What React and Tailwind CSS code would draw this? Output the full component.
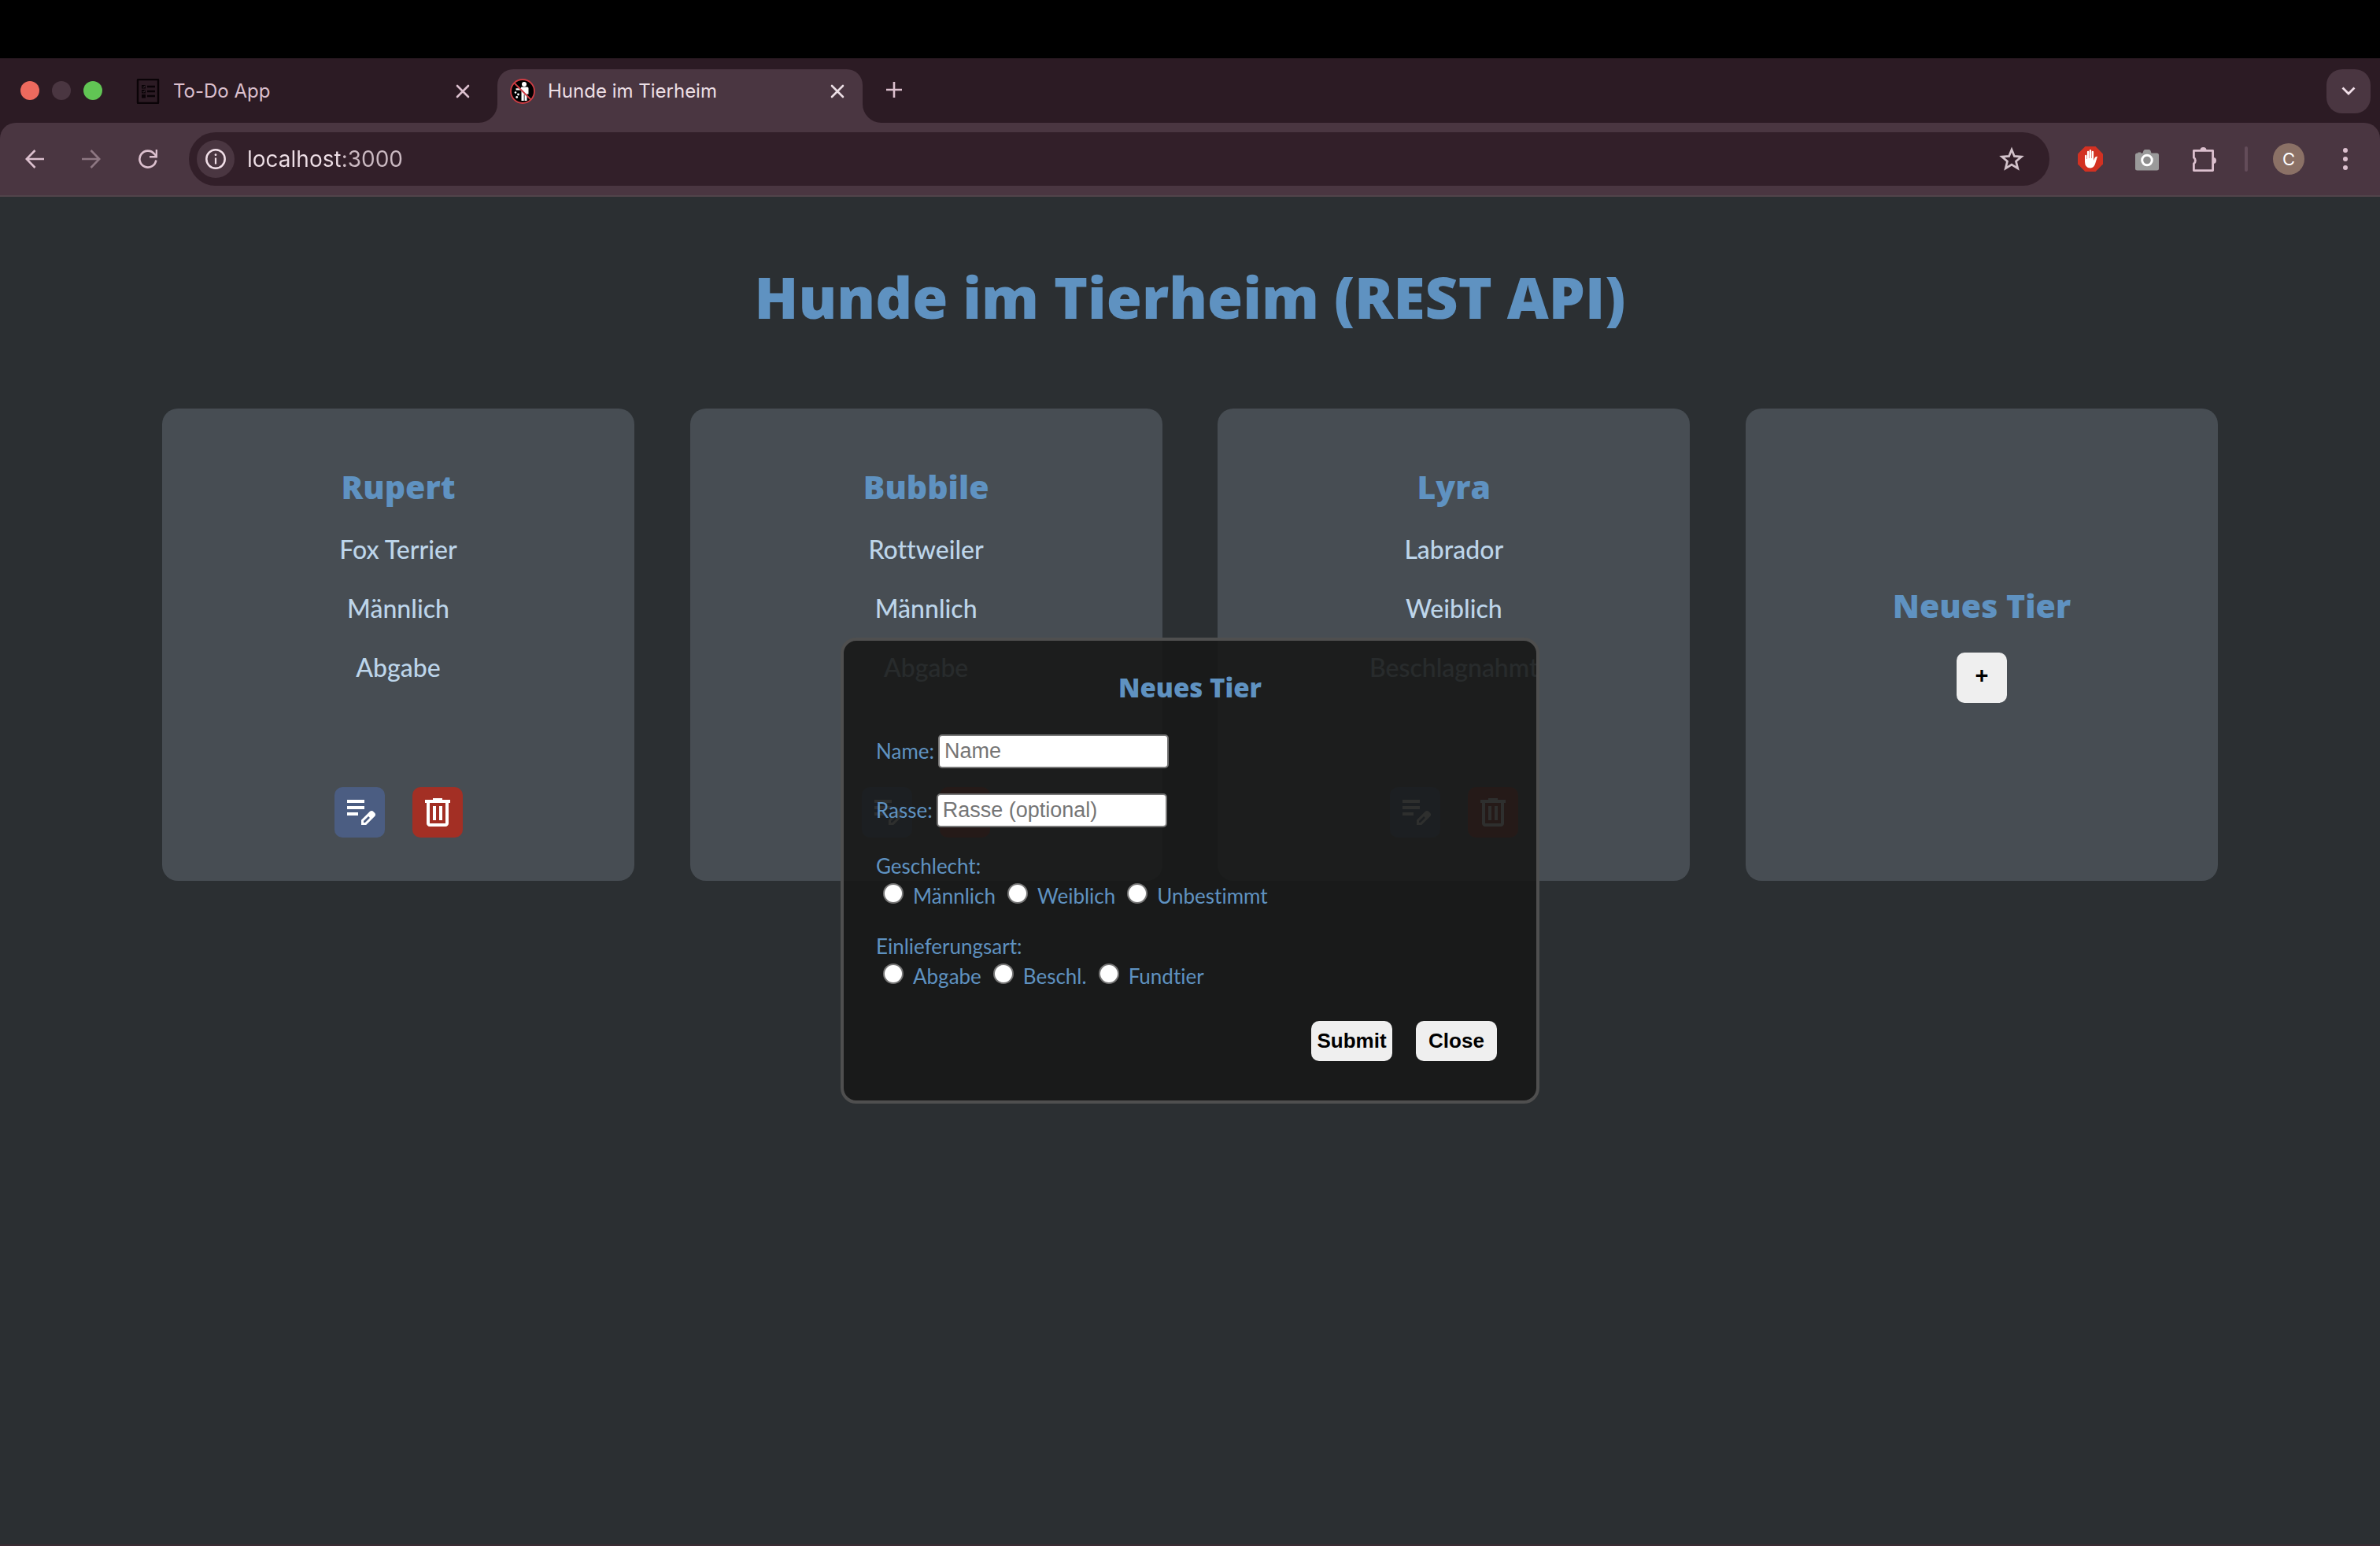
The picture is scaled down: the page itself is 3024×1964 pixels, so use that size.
import React from "react";

const animals = [
  { name: "Rupert", breed: "Fox Terrier", sex: "Männlich", origin: "Abgabe" },
  { name: "Bubbile", breed: "Rottweiler", sex: "Männlich", origin: "Abgabe" },
  { name: "Lyra", breed: "Labrador", sex: "Weiblich", origin: "Beschlagnahmt" },
];

function CloseIcon() {
  return (
    <svg viewBox="0 0 18 18" className="size-[18px]" fill="none" stroke="currentColor" strokeWidth="2.6" strokeLinecap="round">
      <path d="M2 2l14 14M16 2L2 16" />
    </svg>
  );
}

function TodoFavicon() {
  return (
    <svg viewBox="0 0 32 32" className="size-8" fill="none" stroke="#0a0307">
      <rect x="3" y="1" width="26" height="30" rx="0.5" strokeWidth="2.4" />
      <path d="M15 10h10M15 16h10M15 22h10" strokeWidth="2.4" />
      <path d="M8 8h5v4.500H8zM8 14h5v4.500H8z" fill="#0a0307" stroke="none" />
      <path d="M8 20h5v4.500H8z" fill="#0a0307" stroke="none" />
      <path d="M9.500 10.200l1 1 2-2.400M9.500 16.200l1 1 2-2.400" stroke="#5a4a52" strokeWidth="0.700" />
    </svg>
  );
}

function DogFavicon() {
  return (
    <svg viewBox="0 0 32 32" className="size-8">
      <circle cx="16" cy="16" r="15" fill="#000" stroke="#cf3d44" strokeWidth="1.800" />
      <circle cx="18" cy="7" r="3" fill="#fff" />
      <path d="M14.500 10.500h7.500q1.500 0 1.500 1.500v7.500h-2V28h-3v-8h-.8v8h-3.200V14.500H7.500v-2.300h6z" fill="#fff" />
      <circle cx="7" cy="17.500" r="1.300" fill="#fff" />
      <circle cx="10.500" cy="20" r="1.400" fill="#fff" />
      <circle cx="8.700" cy="23.500" r="1.400" fill="#fff" />
      <path d="M5.500 5.500l21 21" stroke="#cf3d44" strokeWidth="1.900" />
    </svg>
  );
}

function TabFlare({ className }) {
  return (
    <svg viewBox="0 0 24 24" className={className} fill="#4a3641" aria-hidden="true">
      <path d="M24 0v24H0A24 24 0 0 0 24 0z" />
    </svg>
  );
}

function EditIcon() {
  return (
    <svg viewBox="0 -960 960 960" className="size-12" fill="#fff" aria-hidden="true">
      <path d="M160-400v-80h280v80H160Zm0-160v-80h440v80H160Zm0-160v-80h440v80H160Zm360 560v-123l221-220q9-9 20-13t22-4q12 0 23 4.500t20 13.500l37 37q8 9 12.500 20t4.500 22q0 11-4 22.500T863-380L643-160H520Zm300-263-37-37 37 37ZM580-220h38l121-122-18-19-19-18-122 121v38Zm141-141-19-18 37 37-18-19Z" />
    </svg>
  );
}

function TrashIcon() {
  return (
    <svg viewBox="0 -960 960 960" className="size-12" fill="#fff" aria-hidden="true">
      <path d="M280-120q-33 0-56.500-23.500T200-200v-520h-40v-80h200v-40h240v40h200v80h-40v520q0 33-23.500 56.500T680-120H280Zm400-600H280v520h400v-520ZM360-280h80v-360h-80v360Zm160 0h80v-360h-80v360ZM280-720v520-520Z" />
    </svg>
  );
}

function TabStrip() {
  return (
    <div className="flex h-[82px] items-end text-[24px] leading-[30px] text-[#dcc0ce]">
      <div className="flex h-[68px] items-center gap-4 pb-[14px] pl-[26px]">
        <span className="size-6 rounded-full bg-[#ed6a5e]" />
        <span className="size-6 rounded-full bg-[#4a3641]" />
        <span className="size-6 rounded-full bg-[#61c554]" />
      </div>
      <div className="ml-[42px] flex h-[68px] w-[460px] items-center pb-3">
        <TodoFavicon />
        <span className="ml-4 flex-1">To-Do App</span>
        <button aria-label="Tab schließen" className="mr-[35px]"><CloseIcon /></button>
      </div>
      <div className="relative flex h-[68px] w-[464px] items-center rounded-t-[20px] bg-[#4a3641] pb-3 pl-4 text-[#ecdfe5]">
        <TabFlare className="absolute bottom-0 -left-6 size-6" />
        <TabFlare className="absolute -right-6 bottom-0 size-6 -scale-x-100" />
        <DogFavicon />
        <span className="ml-4 flex-1">Hunde im Tierheim</span>
        <button aria-label="Tab schließen" className="mr-[23px]"><CloseIcon /></button>
      </div>
      <div className="flex h-[68px] flex-1 items-start pl-[30px]">
        <button aria-label="Neuer Tab" className="mt-4">
          <svg viewBox="0 0 20 20" className="size-5" stroke="currentColor" strokeWidth="2.600"><path d="M10 0v20M0 10h20" /></svg>
        </button>
      </div>
      <button aria-label="Tabs suchen" className="mr-3 mb-3 flex size-14 items-center justify-center rounded-[20px] bg-[#4a3641] text-[#f1dfe8]">
        <svg viewBox="0 0 18 12" className="h-3 w-[18px]" fill="none" stroke="currentColor" strokeWidth="2.800"><path d="M1.500 1.500L9 9l7.500-7.500" /></svg>
      </button>
    </div>
  );
}

function Toolbar() {
  return (
    <div className="flex h-[94px] items-center rounded-t-[20px] border-b-2 border-[#51444a] bg-[#4a3641] pr-10 pl-8 text-[#dcc0ce]">
      <div className="flex items-center gap-12">
        <button aria-label="Zurück">
          <svg viewBox="0 0 24 24" className="size-6" fill="none" stroke="currentColor" strokeWidth="2.600"><path d="M24 12H2M12.500 1L1.800 12l10.700 11" /></svg>
        </button>
        <button aria-label="Vorwärts" className="text-[#8d7782]">
          <svg viewBox="0 0 24 24" className="size-6" fill="none" stroke="currentColor" strokeWidth="2.600"><path d="M0 12h22M11.500 1l10.700 11-10.700 11" /></svg>
        </button>
        <button aria-label="Neu laden">
          <svg viewBox="0 0 24 24" className="size-6" fill="none" stroke="currentColor" strokeWidth="2.600"><path d="M22.300 13.500A10.500 10.500 0 1 1 20 5.400L22.500 8" /><path d="M23 0v9.200h-9" /></svg>
        </button>
      </div>
      <div className="ml-10 flex h-[68px] flex-1 items-center rounded-full bg-[#321f29] pr-8 pl-[10px]">
        <button aria-label="Websiteinformationen" className="flex size-12 items-center justify-center rounded-full bg-[#4a3641] text-[#f1dfe8]">
          <svg viewBox="0 0 26 26" className="size-[26px]" fill="none" stroke="currentColor">
            <circle cx="13" cy="13" r="11.700" strokeWidth="2.500" />
            <path d="M13 11.500v8" strokeWidth="2.200" />
            <circle cx="13" cy="7.700" r="1.400" fill="currentColor" stroke="none" />
          </svg>
        </button>
        <input
          aria-label="Adresse"
          defaultValue="localhost:3000"
          className="ml-4 h-12 flex-1 bg-[linear-gradient(90deg,#eedfe6_118px,#cbbac2_118px)] bg-clip-text text-[28px] text-transparent outline-none"
        />
        <button aria-label="Lesezeichen hinzufügen" className="text-[#d3c3cb]">
          <svg viewBox="0 0 32 32" className="size-8" fill="none" stroke="currentColor" strokeWidth="2.700" strokeLinejoin="miter">
            <path d="M16 4l3.400 8.400 9 .7-6.900 5.800 2.200 8.900L16 23l-7.700 4.800 2.200-8.900-6.900-5.800 9-.7z" />
          </svg>
        </button>
      </div>
      <div className="ml-9 flex items-center">
        <button aria-label="Werbeblocker">
          <svg viewBox="0 0 32 32" className="size-8">
            <path d="M9.400 0h13.200L32 9.400v13.200L22.600 32H9.400L0 22.600V9.400z" fill="#d23122" />
            <path d="M9 12q0-1.300 1.200-1.300t1.200 1.300v4h.5V7q0-1.300 1.200-1.300T14.300 7v8h.5V5.300Q14.800 4 16 4t1.200 1.300V15h.5V7q0-1.300 1.200-1.300T20.100 7v11l1.300-3.300q1-2.200 3.600-1.900-1.500 5-2.700 8.700-1.700 5.900-6.300 5.900-7 0-7-7.900z" fill="#fff" />
          </svg>
        </button>
        <button aria-label="Screenshot" className="ml-10">
          <svg viewBox="0 0 32 32" className="size-8">
            <path d="M3.500 8.500h1V7.500h3.500v1h2.500l1-3q.5-1.500 2-1.500h5q1.500 0 2 1.500l1 3H28.500Q31 8.500 31 11v17q0 2.500-2.500 2.500h-25Q1 30.500 1 28V11q0-2.500 2.500-2.500z" fill="#9a9a9a" />
            <circle cx="16" cy="17.500" r="6.300" fill="#8e8e8e" stroke="#fff" strokeWidth="3" />
          </svg>
        </button>
        <button aria-label="Erweiterungen" className="ml-10">
          <svg viewBox="0 0 34 34" className="size-[34px]" fill="none" stroke="currentColor" strokeWidth="2.800" strokeLinejoin="round">
            <path d="M3.400 6.400h24.200v25.200H3.400v-8.800a4.600 4.600 0 0 0 0-7.600z" />
            <path d="M11.500 6a4 4 0 0 1 8 0zM28 15a4 4 0 0 1 0 8z" fill="currentColor" stroke="none" />
          </svg>
        </button>
        <span className="ml-[34px] h-8 w-1 rounded-full bg-[#634c59]" />
        <button aria-label="Profil" className="ml-8 size-10 rounded-full bg-[#8b7166] text-center text-[22px] text-white">C</button>
        <button aria-label="Menü" className="ml-12">
          <svg viewBox="0 0 8 32" className="h-8 w-2" fill="currentColor"><circle cx="4" cy="5" r="3" /><circle cx="4" cy="16" r="3" /><circle cx="4" cy="27" r="3" /></svg>
        </button>
      </div>
    </div>
  );
}

function AnimalCard({ animal }) {
  return (
    <article className="flex aspect-square w-[600px] flex-col items-center justify-between rounded-[20px] bg-[#474d53] pt-[74px] pb-[55px] text-[#bdd5ea]">
      <div className="text-center text-[32px] leading-[45px] font-medium">
        <h2 className="font-['Gill_Sans','Open_Sans',sans-serif] text-[41px] leading-[50px] font-extrabold text-[#5f92c1]">{animal.name}</h2>
        <p className="mt-8">{animal.breed}</p>
        <p className="mt-[30px]">{animal.sex}</p>
        <p className="mt-[30px]">{animal.origin}</p>
      </div>
      <div className="flex gap-[35px]">
        <button aria-label="Bearbeiten" className="flex size-16 items-center justify-center rounded-[10px] bg-[#4b5d82]"><EditIcon /></button>
        <button aria-label="Löschen" className="flex size-16 items-center justify-center rounded-[10px] bg-[#a32f24]"><TrashIcon /></button>
      </div>
    </article>
  );
}

function TextField({ id, label, placeholder }) {
  return (
    <div className="flex h-[43px] items-center gap-[5px]">
      <label htmlFor={id}>{label}</label>
      <input
        id={id}
        placeholder={placeholder}
        className="h-[43px] w-[293px] rounded-[5px] border-2 border-[#767676] bg-white px-[6px] font-['Liberation_Sans',sans-serif] text-[27px] text-black placeholder:text-[#757575]"
      />
    </div>
  );
}

function RadioGroup({ name, legend, options }) {
  return (
    <fieldset>
      <legend className="leading-[38px]">{legend}</legend>
      <div className="flex h-[38px] pl-[9px]">
        {options.map((option) => (
          <label key={option} className="mr-[15px] flex items-center gap-3">
            <input type="radio" name={name} className="mb-[6px] size-[26px] appearance-none rounded-full border-2 border-[#767676] bg-white" />
            {option}
          </label>
        ))}
      </div>
    </fieldset>
  );
}

function NewAnimalDialog() {
  return (
    <div role="dialog" aria-labelledby="dialog-title" className="absolute top-1/2 left-1/2 w-[888px] -translate-x-1/2 -translate-y-1/2 rounded-[20px] border-4 border-[#4f4f4f] bg-[rgba(23,24,23,0.9)] px-[41px] pt-10 pb-[50px] text-[26px] text-[#5f92c1]">
      <h2 id="dialog-title" className="text-center font-['Gill_Sans','Open_Sans',sans-serif] text-[33px] leading-10 font-extrabold">Neues Tier</h2>
      <form className="mt-[39px]" onSubmit={(e) => e.preventDefault()}>
        <TextField id="name" label="Name:" placeholder="Name" />
        <div className="mt-8"><TextField id="breed" label="Rasse:" placeholder="Rasse (optional)" /></div>
        <div className="mt-[30px]"><RadioGroup name="sex" legend="Geschlecht:" options={["Männlich", "Weiblich", "Unbestimmt"]} /></div>
        <div className="mt-[26px]"><RadioGroup name="origin" legend="Einlieferungsart:" options={["Abgabe", "Beschl.", "Fundtier"]} /></div>
        <div className="mt-[38px] mr-[9px] flex justify-end gap-[30px] font-['Liberation_Sans',sans-serif] text-[26px] font-bold text-black">
          <button type="submit" className="h-[51px] w-[103px] rounded-[10px] bg-[#efefef]">Submit</button>
          <button type="button" className="h-[51px] w-[103px] rounded-[10px] bg-[#efefef]">Close</button>
        </div>
      </form>
    </div>
  );
}

export default function App() {
  return (
    <div className="flex min-h-screen flex-col bg-black pt-[74px]">
      <header className="bg-[#2c1b24] font-[Inter,sans-serif]">
        <TabStrip />
        <Toolbar />
      </header>
      <main className="relative flex-1 border-b-2 border-[#3b2c34] bg-[#2b2f32] px-[206px] font-['Gill_Sans',Lato,sans-serif] [font-variant-ligatures:none]">
        <h1 className="pt-[82px] text-center font-['Gill_Sans','Open_Sans',sans-serif] text-[73px] leading-[90px] font-extrabold text-[#5f92c1]">Hunde im Tierheim (REST API)</h1>
        <section className="mt-[97px] flex justify-between">
          {animals.map((animal) => <AnimalCard key={animal.name} animal={animal} />)}
          <article className="flex aspect-square w-[600px] flex-col items-center rounded-[20px] bg-[#474d53] pt-[225px]">
            <h2 className="font-['Gill_Sans','Open_Sans',sans-serif] text-[41px] leading-[50px] font-extrabold text-[#5f92c1]">Neues Tier</h2>
            <button aria-label="Neues Tier hinzufügen" className="mt-[35px] size-16 rounded-[10px] bg-[#efefef] pb-1 font-['Liberation_Sans',sans-serif] text-[29px] font-bold text-black">+</button>
          </article>
        </section>
        <NewAnimalDialog />
      </main>
    </div>
  );
}
